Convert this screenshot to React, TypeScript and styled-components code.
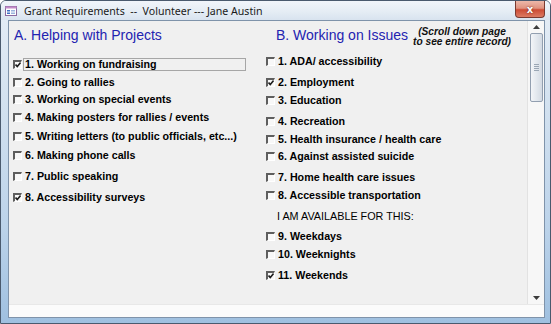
import React from 'react';
import styled, {createGlobalStyle} from 'styled-components';

const GlobalStyle = createGlobalStyle`
  html, body {
    margin: 0;
    padding: 0;
    background: #ffffff;
    overflow: hidden;
  }
  body {
    font-family: "Liberation Sans", Arial, sans-serif;
  }
`;

const Window = styled.div`
  width: 551px;
  height: 324px;
  box-sizing: border-box;
  display: flex;
  flex-direction: column;
  border: 1px solid #4a5a6e;
  border-radius: 6px 6px 0 0;
  background: linear-gradient(180deg, #e6eef7 0%, #d4e2f0 30%, #bcd3ea 70%, #9fc0e0 100%);
  overflow: hidden;
`;

const TitleBar = styled.div`
  height: 19px;
  flex-shrink: 0;
  display: flex;
  align-items: center;
  padding-left: 4px;
  background: linear-gradient(180deg, #f1f5fa 0%, #e4ecf4 60%, #d8e3ef 100%);
`;

const Title = styled.span`
  margin-left: 7px;
  flex: 1;
  font-family: "Noto Sans", "Open Sans", sans-serif;
  font-size: 10.6px;
  color: #1a1a1a;
  white-space: pre;
`;

const CloseButton = styled.div`
  align-self: flex-start;
  width: 30px;
  height: 17px;
  margin-right: 5px;
  box-sizing: border-box;
  display: flex;
  align-items: center;
  justify-content: center;
  border: 1px solid #7a3a30;
  border-top: none;
  border-radius: 0 0 4px 4px;
  background: linear-gradient(180deg, #ecb8a9 0%, #e09380 45%, #cc4c35 55%, #dc7b63 100%);
  color: #ffffff;
  font-family: "DejaVu Sans", sans-serif;
  font-size: 10px;
  font-weight: bold;
  text-shadow: 0 0 2px #5a1a10;
`;

const FrameBody = styled.div`
  flex: 1;
  display: flex;
  padding: 0 5px 5px 7px;
  min-height: 0;
`;

const Client = styled.div`
  flex: 1;
  display: flex;
  flex-direction: column;
  border: 1px solid #7f93aa;
  background: #f0f0f0;
`;

const Main = styled.div`
  flex: 1;
  display: flex;
  min-height: 0;
`;

const Form = styled.div`
  flex: 1;
  display: grid;
  grid-template-columns: 253px 1fr;
  align-content: start;
  padding: 6px 16px 0 4px;
`;

const Column = styled.div`
  display: flex;
  flex-direction: column;
`;

const HeadRow = styled.div`
  height: 20px;
  display: flex;
  justify-content: space-between;
  align-items: flex-start;
`;

const Heading = styled.div<{$indent: number}>`
  padding-left: ${p => p.$indent}px;
  font-size: 14px;
  line-height: 16px;
  color: #2323b0;
  white-space: nowrap;
`;

const Note = styled.div`
  font-size: 10.2px;
  line-height: 10px;
  font-weight: bold;
  font-style: italic;
  text-align: center;
  color: #111111;
  white-space: nowrap;
`;

const NoteLine = styled.div`
  height: 10px;
`;

const List = styled.div<{$top: number}>`
  display: flex;
  flex-direction: column;
  margin-top: ${p => p.$top}px;
`;

const Row = styled.div<{$gap: number}>`
  height: 17px;
  margin-top: ${p => p.$gap}px;
  display: flex;
  align-items: center;
`;

const Box = styled.span`
  width: 9px;
  height: 9px;
  flex-shrink: 0;
  box-sizing: border-box;
  display: flex;
  align-items: center;
  justify-content: center;
  border-top: 2px solid #5e5e5e;
  border-left: 2px solid #5e5e5e;
  border-right: 1px solid #ffffff;
  border-bottom: 1px solid #ffffff;
  background: #f8f8f8;
`;

const Label = styled.span<{$focus?: boolean}>`
  margin-left: 1px;
  box-sizing: border-box;
  width: ${p => (p.$focus ? '223px' : 'auto')};
  padding-left: 1px;
  border: 1px solid ${p => (p.$focus ? '#a6a6a6' : 'transparent')};
  font-size: 10.7px;
  line-height: 11px;
  font-weight: bold;
  color: #000000;
  white-space: nowrap;
`;

const Caption = styled.span`
  padding-left: 11px;
  font-size: 10.8px;
  color: #000000;
  white-space: nowrap;
`;

const Scrollbar = styled.div`
  width: 16px;
  display: flex;
  flex-direction: column;
  align-items: center;
  border-left: 1px solid #e2e2e2;
  background: #f7f7f7;
`;

const Arrow = styled.div`
  height: 12px;
  width: 100%;
  display: flex;
  align-items: center;
  justify-content: center;
`;

const Thumb = styled.div`
  width: 13px;
  height: 69px;
  box-sizing: border-box;
  display: flex;
  flex-direction: column;
  align-items: center;
  justify-content: center;
  gap: 1px;
  border: 1px solid #929fb0;
  border-radius: 2px;
  background: linear-gradient(90deg, #f3f5f8 0%, #e3e8ee 50%, #d3dae3 100%);
  > i {
    width: 5px;
    height: 1px;
    background: #9aa6b4;
  }
`;

const Track = styled.div`
  flex: 1;
`;

const BottomStrip = styled.div`
  height: 12px;
  background: #fbfbfb;
  border-top: 1px solid #e8e8e8;
`;

type Item = {text: string; gap: number; checked?: boolean; focus?: boolean; caption?: boolean};

const projects: Item[] = [
  {text: '1. Working on fundraising', gap: 0, checked: true, focus: true},
  {text: '2. Going to rallies', gap: 1},
  {text: '3. Working on special events', gap: 0},
  {text: '4. Making posters for rallies / events', gap: 1},
  {text: '5. Writing letters (to public officials, etc...)', gap: 2},
  {text: '6. Making phone calls', gap: 2},
  {text: '7. Public speaking', gap: 4},
  {text: '8. Accessibility surveys', gap: 4, checked: true},
];

const issues: Item[] = [
  {text: '1. ADA/ accessibility', gap: 0},
  {text: '2. Employment', gap: 4, checked: true},
  {text: '3. Education', gap: 1},
  {text: '4. Recreation', gap: 4},
  {text: '5. Health insurance / health care', gap: 1},
  {text: '6. Against assisted suicide', gap: 0},
  {text: '7. Home health care issues', gap: 4},
  {text: '8. Accessible transportation', gap: 1},
  {text: 'I AM AVAILABLE FOR THIS:', gap: 3, caption: true},
  {text: '9. Weekdays', gap: 4},
  {text: '10. Weeknights', gap: 1},
  {text: '11. Weekends', gap: 4, checked: true},
];

function Check() {
  return (
    <svg width="6" height="6" viewBox="0 0 6 6">
      <polyline points="0.5,2.5 2.3,4.6 5.6,0.6" fill="none" stroke="#1c1c1c" strokeWidth="1.6"/>
    </svg>
  );
}

function ItemRow({item}: {item: Item}) {
  return (
    <Row $gap={item.gap}>
      {item.caption ? (
        <Caption>{item.text}</Caption>
      ) : (
        <>
          <Box>{item.checked && <Check/>}</Box>
          <Label $focus={item.focus}>{item.text}</Label>
        </>
      )}
    </Row>
  );
}

function FormIcon() {
  return (
    <svg width="12" height="10" viewBox="0 0 12 10">
      <rect x="0.5" y="0.5" width="11" height="9" fill="#ffffff" stroke="#8a6aa0"/>
      <rect x="0.5" y="0.5" width="11" height="2" fill="#c58bc9"/>
      <rect x="2" y="4" width="3" height="1.5" fill="#3d6fc4"/>
      <rect x="2" y="6.5" width="3" height="1.5" fill="#3d6fc4"/>
      <rect x="6" y="4" width="4" height="1.5" fill="#9ab4de"/>
      <rect x="6" y="6.5" width="4" height="1.5" fill="#9ab4de"/>
    </svg>
  );
}

export default function App() {
  return (
    <>
      <GlobalStyle/>
      <Window>
        <TitleBar>
          <FormIcon/>
          <Title>Grant Requirements  --  Volunteer --- Jane Austin</Title>
          <CloseButton>x</CloseButton>
        </TitleBar>
        <FrameBody>
          <Client>
            <Main>
              <Form>
                <Column>
                  <HeadRow>
                    <Heading $indent={1}>A. Helping with Projects</Heading>
                  </HeadRow>
                  <List $top={9}>
                    {projects.map(item => <ItemRow key={item.text} item={item}/>)}
                  </List>
                </Column>
                <Column>
                  <HeadRow>
                    <Heading $indent={10}>B. Working on Issues</Heading>
                    <Note>
                      <NoteLine>(Scroll down page</NoteLine>
                      <NoteLine>to see entire record)</NoteLine>
                    </Note>
                  </HeadRow>
                  <List $top={6}>
                    {issues.map(item => <ItemRow key={item.text} item={item}/>)}
                  </List>
                </Column>
              </Form>
              <Scrollbar>
                <Arrow>
                  <svg width="7" height="4" viewBox="0 0 7 4"><polygon points="0,4 3.5,0 7,4" fill="#3c3c3c"/></svg>
                </Arrow>
                <Thumb><i/><i/><i/><i/></Thumb>
                <Track/>
                <Arrow>
                  <svg width="7" height="4" viewBox="0 0 7 4"><polygon points="0,0 7,0 3.5,4" fill="#3c3c3c"/></svg>
                </Arrow>
              </Scrollbar>
            </Main>
            <BottomStrip/>
          </Client>
        </FrameBody>
      </Window>
    </>
  );
}
